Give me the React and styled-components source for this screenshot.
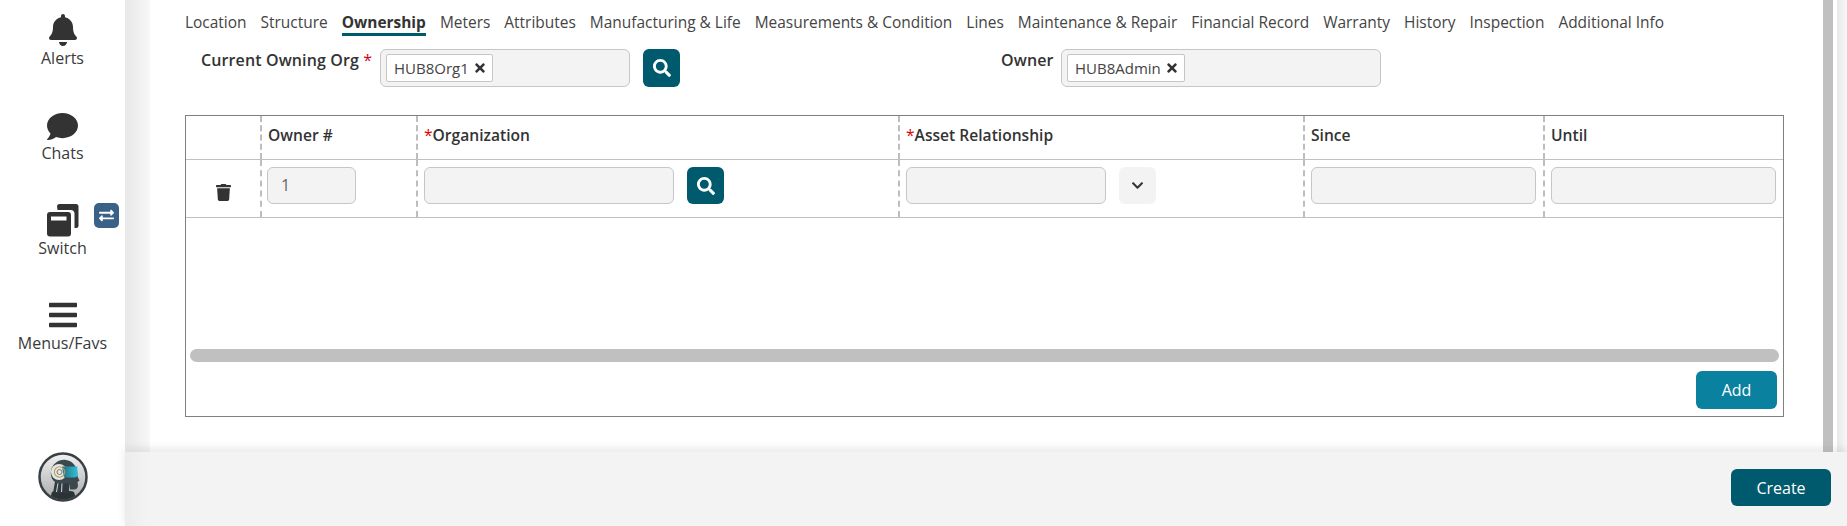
import React from "react";
import styled, { createGlobalStyle } from "styled-components";
import { FaBell, FaComment, FaBars, FaSearch, FaTimes, FaTrash, FaChevronDown, FaExchangeAlt } from "react-icons/fa";

const Global = createGlobalStyle`
  html, body { margin: 0; padding: 0; background: #fff; }
  body { font-family: "Open Sans", "Liberation Sans", sans-serif; color: #333; }
  * { box-sizing: border-box; }
`;

const Page = styled.div`
  display: flex;
  width: 1847px;
  height: 526px;
  overflow: hidden;
  background: #fff;
`;
const Sidebar = styled.nav`
  flex: 0 0 125px;
  display: flex;
  flex-direction: column;
  align-items: center;
  padding: 14px 0 24px;
`;
const NavItem = styled.div`
  position: relative;
  width: 125px;
  height: 95px;
  display: flex;
  flex-direction: column;
  align-items: center;
  font-size: 16px;
  line-height: 20px;
  color: #3a3a3a;
`;
const NavIcon = styled.div`
  height: 34px;
  display: flex;
  justify-content: center;
  align-items: ${p => p.$align || "center"};
  padding-bottom: ${p => (p.$align ? "1px" : "2px")};
  color: #333;
`;
const SwitchBadge = styled.span`
  position: absolute;
  left: 94px;
  top: -1px;
  width: 25px;
  height: 25px;
  border-radius: 5px;
  background: #3a6186;
  color: #fff;
  display: flex;
  align-items: center;
  justify-content: center;
`;
const Avatar = styled.div`
  margin-top: auto;
  width: 50px;
  height: 50px;
`;
const Right = styled.div`
  flex: 1;
  display: flex;
  flex-direction: column;
  min-width: 0;
`;
const Body = styled.div`
  flex: 1;
  display: flex;
  min-height: 0;
`;
const Gutter = styled.div`
  flex: 0 0 ${p => p.$w}px;
  background: linear-gradient(to right, #e9e8e8, #f7f7f7);
`;
const Content = styled.main`
  flex: 1;
  padding: 12px 39px 0 35px;
  min-width: 0;
`;
const ScrollTrack = styled.div`
  flex: 0 0 10px;
  background: #c0c0c0;
`;
const ScrollGap = styled.div`
  flex: 0 0 4px;
  background: #fff;
`;
const Tabs = styled.div`
  display: flex;
  gap: 14px;
  font-size: 15.46px;
  line-height: 20px;
  color: #444;
  white-space: nowrap;
`;
const Tab = styled.span`
  padding-bottom: 1px;
  border-bottom: 3px solid ${p => (p.$active ? "#005a6e" : "transparent")};
  font-weight: ${p => (p.$active ? 700 : 400)};
  color: ${p => (p.$active ? "#333" : "#444")};
`;
const FormRow = styled.div`
  display: flex;
  align-items: flex-start;
  margin-top: 13px;
  padding-left: 16px;
`;
const Label = styled.label`
  flex: 0 0 ${p => p.$w}px;
  margin-left: ${p => p.$ml || 0}px;
  font-size: 16px;
  font-weight: 600;
  letter-spacing: 0.12px;
  line-height: 20px;
  padding-top: 1px;
  color: #333;
  white-space: nowrap;
`;
const Req = styled.span`
  color: #d0021b;
  font-weight: 400;
`;
const TokenField = styled.div`
  width: ${p => p.$w}px;
  height: 38px;
  border: 1px solid #c6c6c6;
  border-radius: 6px;
  background: #f3f3f3;
  padding: 4px 5px;
  display: flex;
  align-items: flex-start;
`;
const Chip = styled.span`
  height: 28px;
  display: inline-flex;
  align-items: center;
  gap: 4px;
  padding: 0 5px 0 7px;
  background: #fff;
  border: 1px solid #c6c6c6;
  border-radius: 2px;
  font-size: 15px;
  color: #444;
`;
const SearchButton = styled.button`
  width: 37px;
  height: ${p => p.$h || 38}px;
  margin-left: ${p => p.$ml}px;
  border: 0;
  border-radius: 6px;
  background: #005a6e;
  color: #fff;
  display: flex;
  align-items: center;
  justify-content: center;
  padding: 0;
  flex: none;
`;
const Table = styled.section`
  margin-top: 28px;
  height: 302px;
  width: 1599px;
  border: 1px solid #808080;
  display: flex;
  flex-direction: column;
`;
const Row = styled.div`
  display: grid;
  grid-template-columns: 74px 156px 482px 405px 240px 1fr;
  height: ${p => p.$h}px;
  border-bottom: 1px solid #c0c0c0;
  flex: none;
`;
const HeadCell = styled.div`
  font-size: 15.6px;
  font-weight: 600;
  line-height: 20px;
  padding: 9px 0 0 6px;
  color: #333;
  ${p => (p.$first ? "" : "border-left: 2px dashed #bdbdbd;")}
`;
const Star = styled.span`
  color: #e00000;
  font-weight: 400;
`;
const Cell = styled.div`
  display: flex;
  align-items: flex-start;
  padding: 7px 0 0 6px;
  ${p => (p.$first ? "" : "border-left: 2px dashed #bdbdbd;")}
`;
const OwnerCell = styled(Cell)`
  padding-left: 5px;
`;
const TrashCell = styled(Cell)`
  justify-content: center;
  padding: 24px 0 0;
  color: #333;
`;
const Input = styled.div`
  width: ${p => p.$w}px;
  height: 37px;
  margin-left: ${p => p.$ml || 0}px;
  border: 1px solid #c6c6c6;
  border-radius: 6px;
  background: #f3f3f3;
  padding-left: 13px;
  font-size: 16px;
  line-height: 34px;
  color: #666;
  flex: none;
`;
const SelectButton = styled.div`
  width: 37px;
  height: 37px;
  margin-left: 13px;
  border-radius: 6px;
  background: #f3f3f3;
  color: #333;
  display: flex;
  align-items: center;
  justify-content: center;
  flex: none;
`;
const TableScroll = styled.div`
  height: 13px;
  margin: 131px 4px 0 4px;
  border-radius: 7px;
  background: #c0c0c0;
`;
const TableFoot = styled.div`
  display: flex;
  justify-content: flex-end;
  padding: 9px 6px 0 0;
`;
const AddButton = styled.button`
  width: 81px;
  height: 38px;
  border: 0;
  border-radius: 6px;
  background: #0a819f;
  color: #fff;
  font: 400 16px "Open Sans", sans-serif;
`;
const Footer = styled.footer`
  position: relative;
  flex: 0 0 74px;
  display: flex;
  justify-content: flex-end;
  padding: 17px 16px 0 0;
  background: linear-gradient(to right, #ececec, #f3f3f3 22px);
  box-shadow: 0 -3px 8px rgba(120, 100, 100, 0.16);
`;
const CreateButton = styled.button`
  width: 100px;
  height: 37px;
  border: 0;
  border-radius: 6px;
  background: #005a6e;
  color: #fff;
  font: 400 16px "Open Sans", sans-serif;
`;

const tabs = ["Location", "Structure", "Ownership", "Meters", "Attributes", "Manufacturing & Life", "Measurements & Condition", "Lines", "Maintenance & Repair", "Financial Record", "Warranty", "History", "Inspection", "Additional Info"];

const SwitchIcon = () => (
  <svg width="32" height="33" viewBox="0 0 32 33">
    <path d="M10 2.5a2.5 2.5 0 0 1 2.5-2.5h16.5a2.5 2.5 0 0 1 2.5 2.500v19a2.500 2.500 0 0 1-2.500 2.500h-1.500v-14a4 4 0 0 0-4-4h-13z" fill="#333" />
    <rect x="0" y="8" width="24" height="24.5" rx="3" fill="#333" />
    <rect x="4" y="12.5" width="15.5" height="4" fill="#fff" />
  </svg>
);

const Logo = () => (
  <svg width="50" height="50" viewBox="0 0 50 50">
    <defs>
      <linearGradient id="disc" x1="0" y1="0" x2="0" y2="1">
        <stop offset="0" stopColor="#f2f2f2" />
        <stop offset="1" stopColor="#a8a8a8" />
      </linearGradient>
      <linearGradient id="visor" x1="0" y1="0" x2="1" y2="0">
        <stop offset="0" stopColor="#2b6f80" />
        <stop offset="1" stopColor="#2cc3dc" />
      </linearGradient>
      <clipPath id="inner"><circle cx="25" cy="25" r="22.500" /></clipPath>
    </defs>
    <circle cx="25" cy="25" r="23.5" fill="url(#disc)" stroke="#384045" strokeWidth="2.5" />
    <g clipPath="url(#inner)">
      <path d="M14 40c4-2 18-2 22 0l3 10H11z" fill="#2c3337" />
      <path d="M17 30h14v11H15z" fill="#2f393e" />
      <path d="M20 31l-1.500 9M24 31l-.5 9" stroke="#cfcfcf" strokeWidth="1.100" />
      <path d="M13 19c1-7 8-12 15-11 6 1 10 5 11 11l.7 6 1.800 3.500-2 1.500.5 4c-.3 2.500-2 3.500-4 3.500h-4l-1-6H20C15 30 12 25 13 19z" fill="#3b484e" />
      <circle cx="21" cy="20" r="8" fill="#e6e6e0" />
      <path d="M24 14.500h15.300l.6 9.500-3 1.500H26z" fill="url(#visor)" />
      <circle cx="21.500" cy="20" r="5.200" fill="none" stroke="#b69b62" strokeWidth="1.100" />
      <circle cx="21.500" cy="20" r="2.500" fill="none" stroke="#7d7d78" strokeWidth="1" />
    </g>
  </svg>
);

export default function App() {
  return (
    <Page>
      <Global />
      <Sidebar>
        <NavItem>
          <NavIcon><FaBell size={32} /></NavIcon>
          Alerts
        </NavItem>
        <NavItem>
          <NavIcon $align="flex-end"><FaComment size={31} /></NavIcon>
          Chats
        </NavItem>
        <NavItem>
          <NavIcon><SwitchIcon /></NavIcon>
          Switch
          <SwitchBadge><FaExchangeAlt size={15} /></SwitchBadge>
        </NavItem>
        <NavItem>
          <NavIcon><FaBars size={32} /></NavIcon>
          Menus/Favs
        </NavItem>
        <Avatar><Logo /></Avatar>
      </Sidebar>
      <Right>
        <Body>
          <Gutter $w={25} />
          <Content>
            <Tabs>
              {tabs.map(t => <Tab key={t} $active={t === "Ownership"}>{t}</Tab>)}
            </Tabs>
            <FormRow>
              <Label $w={179}>Current Owning Org <Req>*</Req></Label>
              <TokenField $w={250}>
                <Chip>HUB8Org1 <FaTimes size={14} color="#333" /></Chip>
              </TokenField>
              <SearchButton $ml={13}><FaSearch size={18} /></SearchButton>
              <Label $w={60} $ml={321}>Owner</Label>
              <TokenField $w={320}>
                <Chip>HUB8Admin <FaTimes size={14} color="#333" /></Chip>
              </TokenField>
            </FormRow>
            <Table>
              <Row $h={44}>
                <HeadCell $first />
                <HeadCell>Owner #</HeadCell>
                <HeadCell><Star>*</Star>Organization</HeadCell>
                <HeadCell><Star>*</Star>Asset Relationship</HeadCell>
                <HeadCell>Since</HeadCell>
                <HeadCell>Until</HeadCell>
              </Row>
              <Row $h={58}>
                <TrashCell $first><FaTrash size={17} /></TrashCell>
                <OwnerCell><Input $w={89}>1</Input></OwnerCell>
                <Cell>
                  <Input $w={250} />
                  <SearchButton $ml={13} $h={37}><FaSearch size={18} /></SearchButton>
                </Cell>
                <Cell>
                  <Input $w={200} />
                  <SelectButton><FaChevronDown size={13} /></SelectButton>
                </Cell>
                <Cell><Input $w={225} /></Cell>
                <Cell><Input $w={225} /></Cell>
              </Row>
              <TableScroll />
              <TableFoot><AddButton>Add</AddButton></TableFoot>
            </Table>
          </Content>
          <ScrollTrack />
          <ScrollGap />
          <Gutter $w={10} />
        </Body>
        <Footer><CreateButton>Create</CreateButton></Footer>
      </Right>
    </Page>
  );
}
